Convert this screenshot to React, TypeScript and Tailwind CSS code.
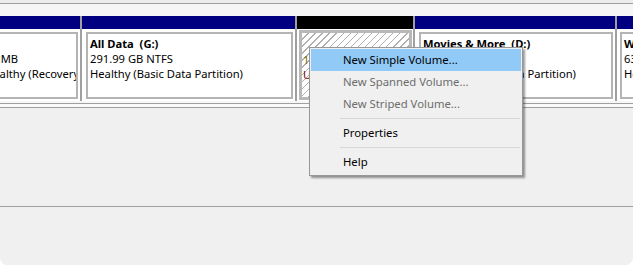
import React from "react";

const FONT = { fontFamily: '"Segoe UI", "Noto Sans", Arial, sans-serif' };

function PartBox({ lines, className = "" }: { lines: { t: string; bold?: boolean }[]; className?: string }) {
  return (
    <div className={"h-full border-2 border-[#b4b4b4] bg-white overflow-hidden pl-[2px] pt-[2px] " + className}>
      {lines.map((l, i) => (
        <div
          key={i}
          className={"h-[15px] leading-[15px] whitespace-pre text-[11.2px] text-black " + (l.bold ? "font-bold" : "")}
        >
          {l.t}
        </div>
      ))}
    </div>
  );
}

function Header({ black }: { black?: boolean }) {
  return <div className={"h-[13px] shrink-0 " + (black ? "bg-black" : "bg-[#000080]")} />;
}

export default function App() {
  return (
    <div className="relative w-[633px] h-[265px] bg-white overflow-hidden" style={FONT}>
      <div className="h-full bg-[#f0f0f0] rounded-b-[8px] flex flex-col overflow-hidden">
        <div className="h-[3px] bg-[#ececec]" />
        <div className="h-px bg-[#a0a0a0]" />
        <div className="h-[12px] bg-[#f6f6f6]" />
        {/* disk row */}
        <div className="h-[85px] flex gap-[2px] bg-[#a0a0a0]">
          {/* col 1 */}
          <div className="w-[80px] shrink-0 flex flex-col overflow-hidden">
            <Header />
            <div className="flex-1 bg-white flex justify-end pr-[2px] pt-[3px] pb-[2px]">
              <div className="w-[97px] shrink-0">
                <PartBox lines={[{ t: "" }, { t: "16 MB" }, { t: "Healthy (Recovery Partition)" }]} />
              </div>
            </div>
          </div>
          {/* col 2 */}
          <div className="w-[213px] shrink-0 flex flex-col">
            <Header />
            <div className="flex-1 bg-white pl-[4px] pr-[2px] pt-[3px] pb-[2px]">
              <PartBox
                lines={[
                  { t: "All Data  (G:)", bold: true },
                  { t: "291.99 GB NTFS" },
                  { t: "Healthy (Basic Data Partition)" },
                ]}
              />
            </div>
          </div>
          {/* col 3 unallocated (selected) */}
          <div className="w-[116px] shrink-0 flex flex-col">
            <Header black />
            <div className="flex-1 bg-white pl-[2px] pr-[1px] pt-[1px] pb-[1px]">
              <div className="h-full border-[3px] border-[#b8b8b8] bg-[repeating-linear-gradient(135deg,#ffffff_0px,#ffffff_4px,#b0b0b0_4px,#b0b0b0_5px)] overflow-hidden pl-[1px] pt-[4px]">
                <div className="h-[15px]" />
                <div className="h-[15px] leading-[15px] text-[11.2px] text-[#8a6a00] whitespace-pre">116.41 GB</div>
                <div className="h-[15px] leading-[15px] text-[11.2px] text-[#800000] whitespace-pre">Unallocated</div>
              </div>
            </div>
          </div>
          {/* col 4 */}
          <div className="w-[200px] shrink-0 flex flex-col">
            <Header />
            <div className="flex-1 bg-white pl-[4px] pr-[2px] pt-[3px] pb-[2px]">
              <PartBox
                lines={[
                  { t: "Movies & More  (D:)", bold: true },
                  { t: "465.76 GB NTFS" },
                  { t: "Healthy (Basic Data Partition)" },
                ]}
              />
            </div>
          </div>
          {/* col 5 */}
          <div className="w-[120px] shrink-0 flex flex-col">
            <Header />
            <div className="flex-1 bg-white pl-[3px] pr-[2px] pt-[3px] pb-[2px]">
              <PartBox
                lines={[
                  { t: "Windows  (C:)", bold: true },
                  { t: "63.35 GB NTFS" },
                  { t: "Healthy (Boot, Page File)" },
                ]}
              />
            </div>
          </div>
        </div>
        <div className="h-[2px] bg-[#f6f6f6]" />
        <div className="h-px bg-[#a0a0a0]" />
        <div className="h-[3px] bg-[#fafafa]" />
        <div className="h-px bg-[#a0a0a0]" />
        <div className="h-[98px] bg-[#f0f0f0]" />
        <div className="h-px bg-[#a0a0a0]" />
        <div className="flex-1 bg-[#f0f0f0]" />
      </div>

      {/* context menu */}
      <div className="absolute left-[309px] top-[47px] w-[214px] h-[129px] bg-[#f0f0f0] border border-[#979797] shadow-[2px_2px_2px_rgba(0,0,0,0.4)] pt-[1px] pl-[1px] pr-[1px]">
        <MenuItem label="New Simple Volume..." active />
        <MenuItem label="New Spanned Volume..." disabled />
        <MenuItem label="New Striped Volume..." disabled />
        <Sep />
        <MenuItem label="Properties" />
        <Sep />
        <MenuItem label="Help" />
      </div>
    </div>
  );
}

function MenuItem({ label, active, disabled }: { label: string; active?: boolean; disabled?: boolean }) {
  return (
    <div
      className={
        "h-[22px] flex items-center pl-[32px] pt-[1px] text-[11.3px] " +
        (active ? "bg-[#91c9f7] " : "") +
        (disabled ? "text-[#6d6d6d]" : "text-black")
      }
    >
      {label}
    </div>
  );
}

function Sep() {
  return (
    <div className="h-[7px] flex items-center pl-[29px] pr-[1px]">
      <div className="h-px w-full bg-[#d7d7d7]" />
    </div>
  );
}
